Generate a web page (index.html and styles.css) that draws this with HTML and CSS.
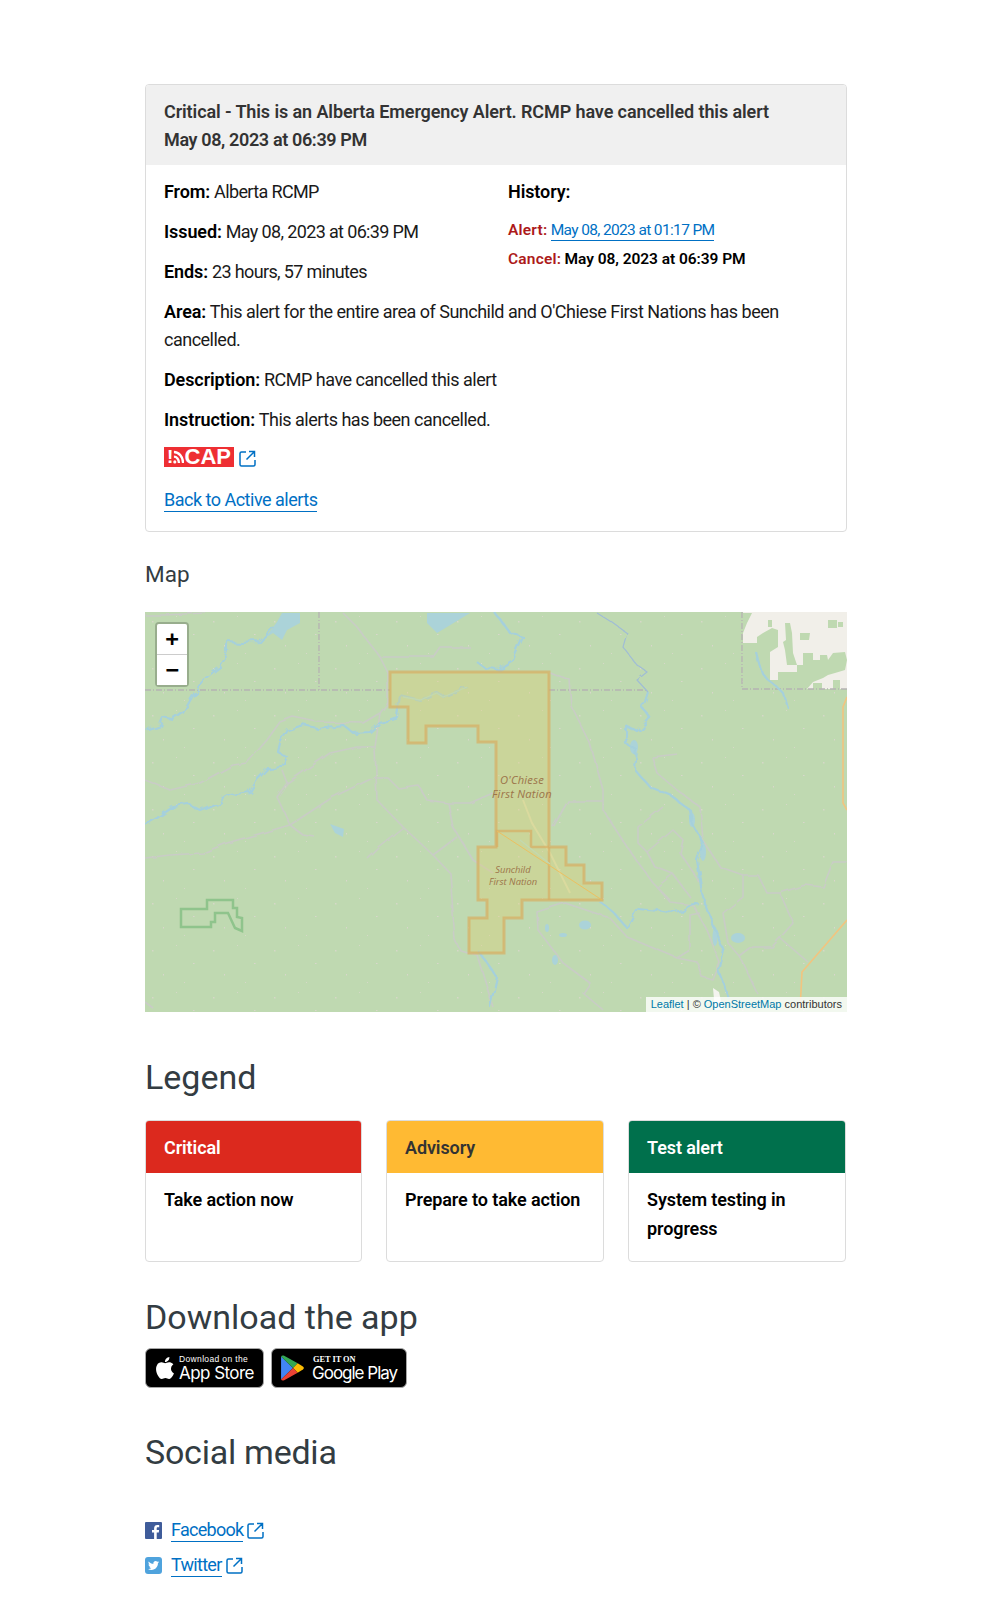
FILE: index.html
```html
<!DOCTYPE html>
<html lang="en">
<head>
<meta charset="utf-8">
<title>Alberta Emergency Alert</title>
<link rel="stylesheet" href="styles.css">
</head>
<body>
<main class="page">
  <section class="alert-card">
    <header class="alert-head">
      <div>Critical - This is an Alberta Emergency Alert. RCMP have cancelled this alert</div>
      <div class="head-date">May 08, 2023 at 06:39 PM</div>
    </header>
    <div class="alert-body">
      <div class="meta-grid">
        <div>
          <p class="row"><b>From:</b> <span class="tight">Alberta RCMP</span></p>
          <p class="row"><b>Issued:</b> <span class="tight">May 08, 2023 at 06:39 PM</span></p>
          <p class="row"><b>Ends:</b> <span class="tight">23 hours, 57 minutes</span></p>
        </div>
        <div>
          <p class="row"><b>History:</b></p>
          <div class="hist"><b class="red">Alert:</b> <a class="link tight" href="#">May 08, 2023 at 01:17 PM</a></div>
          <div class="hist"><b class="red">Cancel:</b> <b>May 08, 2023 at 06:39 PM</b></div>
        </div>
      </div>
      <p class="row area"><b>Area:</b> This alert for the entire area of Sunchild and O'Chiese First Nations has been cancelled.</p>
      <p class="row"><b>Description:</b> RCMP have cancelled this alert</p>
      <p class="row"><b>Instruction:</b> This alerts has been cancelled.</p>
      <div class="cap-row">
        <span class="cap-logo">
          <span class="cap-bang">!</span>
          <svg class="cap-waves" viewBox="0 0 12 16"><path d="M1 2c5.500 0 10 5.500 10 12M1 7c3 0 5.500 3 5.500 7" fill="none" stroke="#fff" stroke-width="2.600"/><circle cx="2" cy="12.800" r="1.700" fill="#fff"/></svg>
          <span class="cap-text">CAP</span>
        </span>
        <svg class="ext" viewBox="0 0 17 17"><path d="M7 2H2.500A1.500 1.500 0 0 0 1 3.500v11A1.500 1.500 0 0 0 2.500 16h12a1.500 1.500 0 0 0 1.500-1.500V10M7.500 9.500 15 2M10 1.500h5.500V7" /></svg>
      </div>
      <a class="link back" href="#">Back to Active alerts</a>
    </div>
  </section>

  <h3 class="map-title">Map</h3>
  <div class="map">
    <svg class="map-svg" viewBox="0 0 702 400" preserveAspectRatio="none">
      <defs>
        <pattern id="specks" width="61" height="47" patternUnits="userSpaceOnUse">
          <rect x="7" y="9" width="1.500" height="1.500" fill="#d6d8c8"/>
          <rect x="31" y="4" width="1" height="1" fill="#d6d8c8"/>
          <rect x="48" y="22" width="1.500" height="1" fill="#d9d6cc"/>
          <rect x="18" y="33" width="1" height="1.500" fill="#d9d6cc"/>
          <rect x="39" y="41" width="1" height="1" fill="#d6d8c8"/>
        </pattern>
        <filter id="wiggle" x="-5%" y="-5%" width="110%" height="110%">
          <feTurbulence type="fractalNoise" baseFrequency="0.09" numOctaves="2" seed="4"/>
          <feDisplacementMap in="SourceGraphic" scale="9"/>
        </filter>
        <filter id="wiggle-soft" x="-5%" y="-5%" width="110%" height="110%">
          <feTurbulence type="fractalNoise" baseFrequency="0.06" numOctaves="2" seed="9"/>
          <feDisplacementMap in="SourceGraphic" scale="4"/>
        </filter>
      </defs>
      <rect class="land" width="702" height="400"/>
      <rect width="702" height="400" fill="url(#specks)"/>

      <rect class="bare" x="598" y="0" width="104" height="77"/>
      <path class="land" d="M598 31H612V25L618 21 627 16 633 18V35L625 40V68H633V60H652V53H658V41H668V48H675V43H682L683 48 688 41 700 40 702 48 700 58 690 61 683 63 678 66 668 70 662 77H598Z"/>
      <path class="land" d="M640 11H645L647 21 648 41 652 53H642L640 38 638 30 641 28Z"/>
      <path class="land" d="M598 1H607L602 11 598 21ZM623 8H627V15H623ZM683 8H692V16H683ZM693 10H698V15H693ZM655 21H665L664 28H655ZM668 71H677V77H668ZM688 68H695V77H688Z"/>

      <g class="admin">
        <path d="M0 78H245M174 0V78M404 78H503M597 0V77H702"/>
      </g>

      <g class="roads" filter="url(#wiggle-soft)">
        <path d="M0 168 25 178 55 171 88 153 102 151 122 128 135 110 148 105 172 110 218 111 235 101 243 91 243 61 235 45 212 15 198 1"/>
        <path d="M235 45H288L295 35H325"/>
        <path d="M235 101 230 135 232 188 258 215 288 243 305 261 310 328 315 338 332 343 348 395"/>
        <path d="M0 246 25 243 58 241 82 231 145 213 188 185 230 165"/>
        <path d="M230 135H212L185 141 175 148 142 171 132 185 145 213 158 223 170 225"/>
        <path d="M137 158 142 171M230 166H243L253 176 273 173 282 188 303 191 325 191 348 181"/>
        <path d="M303 191 308 215 328 248 348 261M258 215 233 235 222 246M288 243 312 225"/>
        <path d="M404 60 425 68 427 95 445 131 458 178 458 198 482 235 508 271 525 288"/>
        <path d="M458 189H423L408 215M507 145 533 142M507 145 512 161 532 178 555 195 558 228 575 255 598 263H613L622 281H635L660 273 678 275 688 250H702"/>
        <path d="M598 263V285L578 301 583 331 595 345 612 381M635 281 648 311 627 335H608L595 345M635 326 663 350"/>
        <path d="M518 195 493 215V231L502 240 528 218 538 228 535 241 555 271M502 240 510 255 528 262 545 285M528 262 512 275 525 290 548 293"/>
        <path d="M420 291 392 300 393 318 418 351 445 371 438 381 458 398M420 291 465 306 482 325 532 346 545 338V303L555 301"/>
        <path d="M532 346 552 350 557 365 568 368 575 351 562 318 548 293"/>
        <path d="M0 3 20 3 60 1M0 390 8 396"/>
      </g>

      <g class="water-fill">
        <path d="M120 26 132 10 137 1H155V11L142 18 137 28 128 21Z"/>
        <path d="M282 1H325L302 15 292 21 282 11Z"/>
        <ellipse cx="440" cy="313" rx="6" ry="4.500"/>
        <ellipse cx="593" cy="326" rx="7" ry="5"/>
        <ellipse cx="410" cy="348" rx="3" ry="5"/>
        <ellipse cx="418" cy="323" rx="4" ry="2"/>
        <ellipse cx="402" cy="316" rx="2" ry="4"/>
        <path d="M185 212 199 217 198 225 190 221Z"/>
        <ellipse cx="489" cy="135" rx="4" ry="7"/>
        <ellipse cx="547" cy="208" rx="3" ry="7"/>
        <ellipse cx="558" cy="240" rx="3" ry="9"/>
        <ellipse cx="570" cy="325" rx="2.500" ry="9"/>
      </g>
      <g class="river" filter="url(#wiggle)">
        <path d="M0 118 15 113 18 106 28 108 38 101 50 80 58 68 75 55 83 41 83 30 95 31 115 30 128 15"/>
        <path d="M0 213 12 206 28 195 45 193 55 198 72 191 85 183 105 180 112 168 123 156 137 155 142 145 133 140 135 131 143 118 158 113 172 116 198 113 208 121 225 120 235 111 252 105 253 98 255 83 275 88 292 81 298 85 322 75"/>
        <path d="M350 1 365 21 378 25 368 48 352 58 340 56 330 48"/>
        <path d="M503 80 498 96 505 106 493 120 480 113 480 131 492 138 490 158 505 175 525 183 545 198 547 211 558 231 552 248 557 281 562 298 570 318 578 338 573 358 585 388"/>
        <path d="M455 290 468 300 482 316 492 296 512 298 528 301 542 296 555 293"/>
        <path d="M611 40 613 48 617 61 623 68 633 76 638 81 642 95"/>
        <path d="M335 341 352 365 345 395"/>
      </g>
      <path class="river-thin" filter="url(#wiggle-soft)" d="M452 1 468 11 482 21 478 35 492 53 502 60 492 68 503 80"/>
      <path class="hwy" d="M702 85 698 95V191L702 198M702 308 657 360 655 398"/>
      <path class="snow" d="M568 376 574 380 578 398H570Z"/>

      <path class="green-shape" d="M36 297H62V288H88V296H92V305L97 306V319L90 316 83 301H70V310H66V315H36Z"/>

      <path class="zone" d="M245 60H404V235H421V253H439V271H457V288H377V306H359V341H324V306H342V288H333V235H351V130H333V114H281V131H263V95H245Z"/>
      <path class="zone-detail" d="M378 188 387 211 405 241 425 281"/>
      <path class="zone-line-wide" d="M404 235V288M352 235V219H386V235H404"/>
      <path class="zone-line" d="M352 219 457 288"/>
      <path class="zone-river" d="M258 85 275 88 292 81 298 85 322 75M375 228 405 252"/>

      <text class="place" x="377" y="172">O'Chiese</text>
      <text class="place" x="377" y="186">First Nation</text>
      <text class="place small" x="368" y="261">Sunchild</text>
      <text class="place small" x="368" y="273">First Nation</text>
    </svg>
    <div class="zoom-bar">
      <a class="zoom-btn plus" href="#">+</a>
      <a class="zoom-btn" href="#">−</a>
    </div>
    <div class="attrib"><a href="#">Leaflet</a> | © <a href="#">OpenStreetMap</a> contributors</div>
  </div>

  <h2 class="legend-title">Legend</h2>
  <div class="legend">
    <div class="legend-card">
      <div class="legend-head critical">Critical</div>
      <div class="legend-body">Take action now</div>
    </div>
    <div class="legend-card">
      <div class="legend-head advisory">Advisory</div>
      <div class="legend-body">Prepare to take action</div>
    </div>
    <div class="legend-card">
      <div class="legend-head test">Test alert</div>
      <div class="legend-body">System testing in progress</div>
    </div>
  </div>

  <h2 class="app-title">Download the app</h2>
  <div class="badges">
    <a class="badge apple" href="#">
      <svg class="apple-logo" viewBox="0 0 24 24"><path d="M12.152 6.896c-.948 0-2.415-1.078-3.960-1.040-2.040.027-3.910 1.183-4.961 3.014-2.117 3.675-.546 9.103 1.519 12.090 1.013 1.454 2.208 3.090 3.792 3.039 1.520-.065 2.090-.987 3.935-.987 1.831 0 2.350.987 3.960.948 1.637-.026 2.676-1.480 3.676-2.948 1.156-1.688 1.636-3.325 1.662-3.415-.039-.013-3.182-1.221-3.220-4.857-.026-3.040 2.480-4.494 2.597-4.559-1.429-2.090-3.623-2.324-4.390-2.376-2-.156-3.675 1.090-4.610 1.090zM15.530 3.830c.843-1.012 1.400-2.427 1.245-3.830-1.207.052-2.662.805-3.532 1.818-.780.896-1.454 2.338-1.273 3.714 1.338.104 2.715-.688 3.559-1.701"/></svg>
      <span class="badge-text">
        <span class="badge-small">Download on the</span>
        <span class="badge-big">App Store</span>
      </span>
    </a>
    <a class="badge google" href="#">
      <svg class="play-logo" viewBox="0 0 22 25">
        <path fill="#4285f4" d="M0 1.500V23.500L11.500 12.500Z"/>
        <path fill="#34a853" d="M0 1.500C.6.300 1.800.200 3 .800L16 8 11.500 12.500Z"/>
        <path fill="#fbbc04" d="M16 8 21 11C22.200 11.800 22.200 13.200 21 14L16 17 11.500 12.500Z"/>
        <path fill="#ea4335" d="M0 23.500C.6 24.700 1.800 24.800 3 24.200L16 17 11.500 12.500Z"/>
      </svg>
      <span class="badge-text">
        <span class="badge-small serif">GET IT ON</span>
        <span class="badge-big gplay">Google Play</span>
      </span>
    </a>
  </div>

  <h2 class="social-title">Social media</h2>
  <ul class="social">
    <li class="social-row">
      <svg class="social-icon" viewBox="0 0 17 17"><rect width="17" height="17" rx="1" fill="#3f5c9a"/><path fill="#fff" d="M11.700 17V10.500H13.800L14.100 8H11.700V6.400C11.700 5.700 11.900 5.200 12.900 5.200H14.200V3C14 3 13.200 2.900 12.300 2.900 10.400 2.900 9.100 4.100 9.100 6.200V8H7V10.500H9.100V17Z"/></svg>
      <a class="link" href="#">Facebook</a>
      <svg class="ext" viewBox="0 0 17 17"><path d="M7 2H2.500A1.500 1.500 0 0 0 1 3.500v11A1.500 1.500 0 0 0 2.500 16h12a1.500 1.500 0 0 0 1.500-1.500V10M7.500 9.500 15 2M10 1.500h5.500V7" /></svg>
    </li>
    <li class="social-row">
      <svg class="social-icon" viewBox="0 0 17 17"><rect width="17" height="17" rx="3" fill="#4fa3dd"/><g transform="translate(3 3) scale(.46)"><path fill="#fff" d="M23.953 4.570a10 10 0 01-2.825.775 4.958 4.958 0 002.163-2.723c-.951.555-2.005.959-3.127 1.184a4.920 4.920 0 00-8.384 4.482C7.690 8.095 4.067 6.130 1.640 3.162a4.822 4.822 0 00-.666 2.475c0 1.710.870 3.213 2.188 4.096a4.904 4.904 0 01-2.228-.616v.060a4.923 4.923 0 003.946 4.827 4.996 4.996 0 01-2.212.085 4.936 4.936 0 004.604 3.417 9.867 9.867 0 01-6.102 2.105c-.390 0-.779-.023-1.170-.067a13.995 13.995 0 007.557 2.209c9.053 0 13.998-7.496 13.998-13.985 0-.210 0-.420-.015-.630A9.935 9.935 0 0024 4.590z"/></g></svg>
      <a class="link" href="#">Twitter</a>
      <svg class="ext" viewBox="0 0 17 17"><path d="M7 2H2.500A1.500 1.500 0 0 0 1 3.500v11A1.500 1.500 0 0 0 2.500 16h12a1.500 1.500 0 0 0 1.500-1.500V10M7.500 9.500 15 2M10 1.500h5.500V7" /></svg>
    </li>
  </ul>
</main>
</body>
</html>
```

FILE: styles.css
```css
* { box-sizing: border-box; }
html, body { margin: 0; padding: 0; background: #fff; }
body {
  font-family: Roboto, "Liberation Sans", sans-serif;
  font-size: 18px;
  line-height: 28.5px;
  color: #1a1a1a;
  letter-spacing: -0.5px;
}
.page { width: 702px; margin-left: 145px; padding: 84px 0 24px; }
p { margin: 0; }
b { font-weight: 600; color: #000; letter-spacing: -0.1px; }
a { color: inherit; }
.tight { letter-spacing: -0.64px; }

.alert-card { border: 1px solid #dcdcdc; border-radius: 4px; overflow: hidden; height: 448px; }
.alert-head { background: #f0f0f0; padding: 13px 18px 9px; font-weight: 600; color: #333; height: 80px; letter-spacing: -0.1px; line-height: 28px; }
.head-date { letter-spacing: -0.36px; }
.alert-body { padding: 13px 18px 0; }
.meta-grid { display: grid; grid-template-columns: 344px 1fr; }
.row { margin-bottom: 11.500px; }
.area { line-height: 28px; margin-bottom: 12px; }
.hist { font-size: 15.500px; line-height: 28.6px; }
.hist:first-of-type { margin-top: -2px; }
.hist b { letter-spacing: -0.05px; }
.hist .red { color: #ad1a1a; letter-spacing: .2px; }
.link { color: #0070c4; text-decoration: none; border-bottom: 1px solid #0070c4; padding-bottom: 1px; font-weight: 400; }
.cap-row { display: flex; align-items: flex-start; gap: 5px; height: 40px; }
.cap-logo { display: flex; align-items: center; width: 70px; height: 20px; margin-top: 1px; background: #ee2f33; color: #fff; padding-left: 3px; flex: none; }
.cap-bang { flex: none; width: 5px; font: 700 19px/20px "Liberation Sans", sans-serif; letter-spacing: 0; }
.cap-waves { flex: none; width: 11px; height: 15px; margin-left: 1px; }
.cap-text { flex: none; font: 700 22px/20px "Liberation Sans", sans-serif; letter-spacing: 0; margin-left: .5px; }
.ext { width: 17px; height: 17px; fill: none; stroke: #0070c4; stroke-width: 1.500; flex: none; margin-top: 4px; }

.map-title { margin: 28px 0 23px; font-size: 22.500px; font-weight: 400; line-height: 29px; color: #333c42; letter-spacing: 0; }
.map { position: relative; height: 400px; overflow: hidden; }
.map-svg { display: block; width: 702px; height: 400px; }
.land { fill: #bfd9b1; }
.bare { fill: #f1efe9; }
.admin path { fill: none; stroke: #b5b2b2; stroke-width: 1.300; stroke-dasharray: 6 2 1 2; }
.roads path { fill: none; stroke: #c9ccc6; stroke-width: 1.600; stroke-linejoin: round; }
.water-fill * { fill: #abd3d9; }
.river path { fill: none; stroke: #a5d0dc; stroke-width: 2.200; stroke-linejoin: round; }
.river-thin { fill: none; stroke: #a0bdd5; stroke-width: 1.200; }
.hwy { fill: none; stroke: #f2c47f; stroke-width: 1.600; }
.snow { fill: #f4f4ef; }
.green-shape { fill: none; stroke: #8fc48c; stroke-width: 2.500; }
.zone { fill: rgba(225, 205, 110, .33); stroke: rgba(215, 175, 100, .72); stroke-width: 3; }
.zone-detail { fill: none; stroke: rgba(225, 220, 160, .7); stroke-width: 2; }
.zone-line-wide { fill: none; stroke: rgba(215, 175, 100, .72); stroke-width: 2.500; }
.zone-line { fill: none; stroke: rgba(240, 190, 90, .9); stroke-width: 1; }
.zone-river { fill: none; stroke: #c2d8b0; stroke-width: 1.300; }
.place { font: italic 11.200px "Open Sans", sans-serif; fill: #9c7449; text-anchor: middle; letter-spacing: .2px; }
.place.small { font-size: 9.400px; letter-spacing: 0; }

.zoom-bar { position: absolute; left: 10px; top: 10px; display: flex; flex-direction: column; border: 2px solid rgba(0, 0, 0, .2); border-radius: 4px; background-clip: padding-box; }
.zoom-btn { display: block; width: 30px; height: 30px; background: #fff; text-align: center; color: #000; text-decoration: none; font: 700 22px/30px "DejaVu Sans Mono", monospace; letter-spacing: 0; }
.zoom-btn.plus { height: 31px; border-bottom: 1px solid #ccc; border-radius: 2px 2px 0 0; }
.attrib { position: absolute; right: 0; bottom: 0; background: rgba(255, 255, 255, .8); padding: 0 5px; font: 11px/15px "Liberation Sans", sans-serif; letter-spacing: 0; color: #333; }
.attrib a { color: #0078a8; text-decoration: none; }

.legend-title { margin: 43px 0 21px; font-size: 34px; font-weight: 400; line-height: 44px; color: #333c42; letter-spacing: 0; }
.legend { display: grid; grid-template-columns: 216.500px 217.500px 218px; column-gap: 24.500px; }
.legend-card { height: 142px; border: 1px solid #dcdcdc; border-radius: 4px; overflow: hidden; }
.legend-head { height: 52px; padding: 13px 18px 0; font-weight: 600; letter-spacing: -0.1px; }
.critical { background: #dc291e; color: #fff; }
.advisory { background: #ffba33; color: #333; }
.test { background: #00704c; color: #fff; }
.legend-body { padding: 13px 18px; font-weight: 600; color: #000; letter-spacing: -0.1px; }

.app-title { margin: 33px 0 9px; font-size: 34px; font-weight: 400; line-height: 44px; color: #333c42; letter-spacing: 0; }
.badges { display: flex; gap: 7px; }
.badge { display: flex; align-items: center; height: 40px; background: #000; border: 1px solid #a6a6a6; border-radius: 6px; color: #fff; text-decoration: none; letter-spacing: 0; }
.apple { width: 119px; padding-left: 8px; gap: 3px; }
.google { width: 136px; padding-left: 9px; gap: 8px; }
.apple-logo { width: 22px; height: 22px; fill: #fff; flex: none; }
.play-logo { width: 23px; height: 26px; flex: none; }
.badge-text { display: flex; flex-direction: column; white-space: nowrap; margin-top: 1px; }
.badge-small { font: 8.500px/10px "Liberation Sans", sans-serif; letter-spacing: .35px; }
.badge-small.serif { font: 700 8.400px/9px "Liberation Serif", serif; letter-spacing: -.05px; margin-left: 1px; }
.badge-big { font: 400 17px/19px Inter, "Liberation Sans", sans-serif; letter-spacing: -.55px; }
.gplay { letter-spacing: -1px; }

.social-title { margin: 42px 0 39px; font-size: 34px; font-weight: 400; line-height: 44px; color: #333c42; letter-spacing: -0.25px; }
.social { list-style: none; margin: 0; padding: 0; }
.social-row { display: flex; align-items: center; height: 35px; }
.social-row .link { line-height: 21px; letter-spacing: -.72px; }
.social-icon { width: 17px; height: 17px; margin-right: 9px; flex: none; }
.social-row .ext { margin: 0 0 0 4px; }
```
